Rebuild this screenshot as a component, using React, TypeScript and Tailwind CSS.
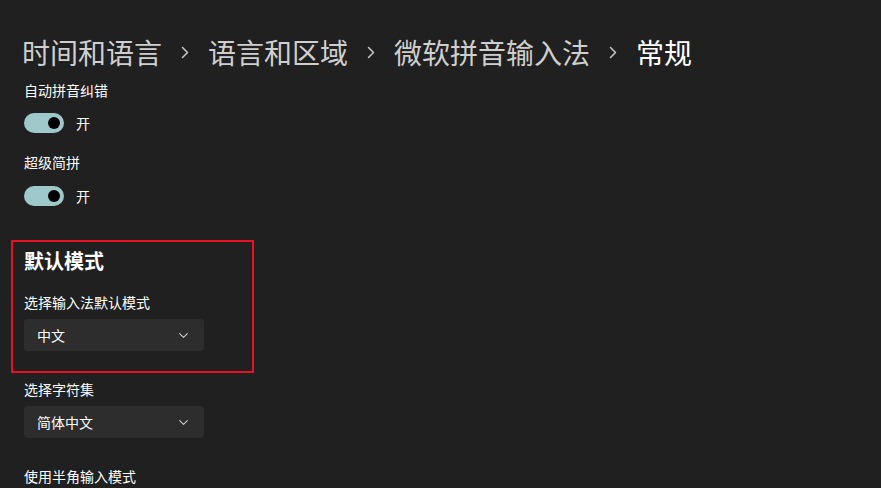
const font = "font-['Segoe_UI','Noto_Sans_CJK_SC',sans-serif]";

function Chevron() {
  return (
    <span className="flex w-[46px] justify-center">
      <svg width="8" height="13" viewBox="0 0 8 13" fill="none">
        <path d="M1.5 1.5 L6.5 6.5 L1.5 11.5" stroke="#c8c8c8" strokeWidth="1.5" strokeLinecap="round" strokeLinejoin="round" />
      </svg>
    </span>
  );
}

function Toggle() {
  return (
    <div className="flex h-5 items-center">
      <div className="flex h-5 w-10 items-center justify-end rounded-full bg-[#9fc8cb] pr-[4px]">
        <div className="h-3 w-3 rounded-full bg-black" />
      </div>
      <span className="ml-3 text-[14px] leading-5 text-white">开</span>
    </div>
  );
}

function Dropdown({ value }: { value: string }) {
  return (
    <div className="flex h-8 w-[180px] items-center justify-between rounded-[4px] bg-[#2d2d2d] pl-[13px] pr-[16px]">
      <span className="text-[14px] leading-5 text-white">{value}</span>
      <svg width="9" height="5" viewBox="0 0 9 5" fill="none">
        <path d="M0.7 0.7 L4.5 4.3 L8.3 0.7" stroke="#cfcfcf" strokeWidth="1.1" strokeLinecap="round" strokeLinejoin="round" />
      </svg>
    </div>
  );
}

function Label({ children }: { children: string }) {
  return <div className="text-[14px] leading-5 text-white">{children}</div>;
}

export default function App() {
  return (
    <div className={`h-[488px] w-[881px] overflow-hidden bg-[#202020] ${font}`}>
      {/* Breadcrumb title */}
      <div className="box-content flex h-10 items-center pl-[22px] pt-[32px] text-[28px] leading-10">
        <span className="text-[#cfcfcf]">时间和语言</span>
        <Chevron />
        <span className="text-[#cfcfcf]">语言和区域</span>
        <Chevron />
        <span className="text-[#cfcfcf]">微软拼音输入法</span>
        <Chevron />
        <span className="text-white">常规</span>
      </div>

      <div className="pl-6 pt-2">
        <Label>自动拼音纠错</Label>
        <div className="mt-[13px]">
          <Toggle />
        </div>
        <div className="mt-[19px]">
          <Label>超级简拼</Label>
        </div>
        <div className="mt-[14px]">
          <Toggle />
        </div>
      </div>

      {/* Highlighted section */}
      <div className="ml-[11px] mt-[34px] w-[243px] border-2 border-[#e81123] pb-5 pl-[11px] pt-[5px]">
        <div className="text-[20px] font-semibold leading-7 text-white">默认模式</div>
        <div className="mt-[17px]">
          <Label>选择输入法默认模式</Label>
        </div>
        <div className="mt-[7px]">
          <Dropdown value="中文" />
        </div>
      </div>

      <div className="pl-6 pt-[6px]">
        <Label>选择字符集</Label>
        <div className="mt-[7px]">
          <Dropdown value="简体中文" />
        </div>
        <div className="mt-[28px]">
          <Label>使用半角输入模式</Label>
        </div>
      </div>
    </div>
  );
}
